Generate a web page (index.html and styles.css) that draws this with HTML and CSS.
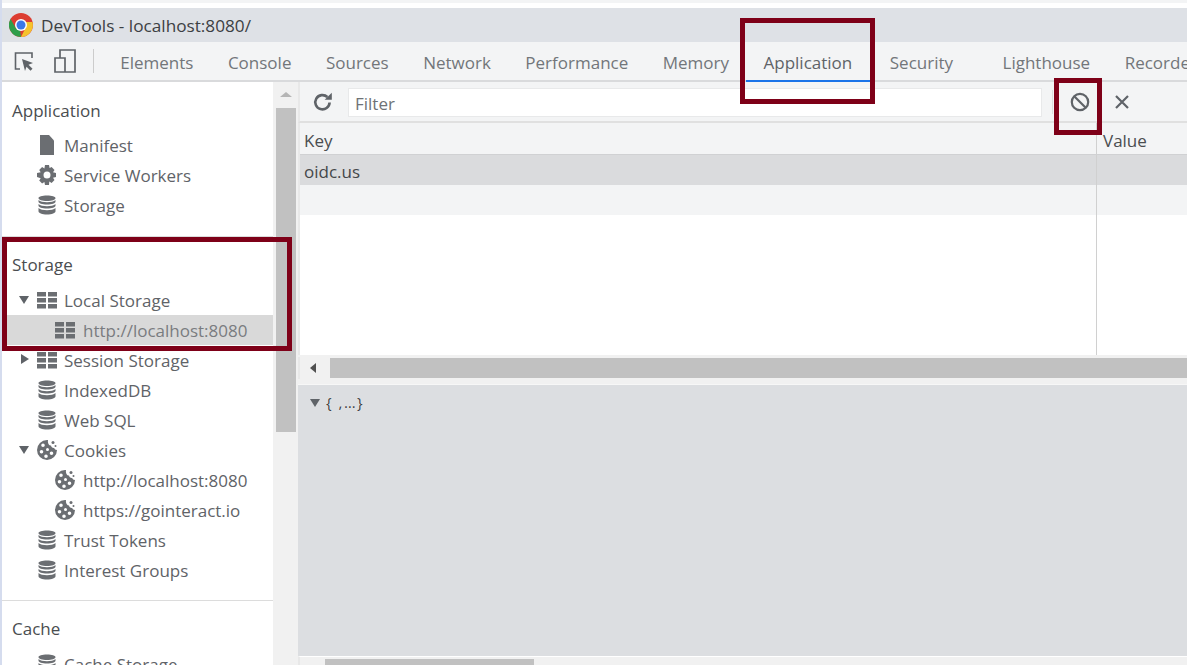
FILE: index.html
```html
<!DOCTYPE html>
<html lang="en">
<head>
<meta charset="utf-8">
<title>DevTools</title>
<link rel="stylesheet" href="styles.css">
</head>
<body>
<svg class="defs" width="0" height="0" aria-hidden="true">
  <defs>
    <symbol id="db" viewBox="0 0 20 20"><path d="M10 .5C5 .5 1.500 1.600 1.500 3.200S5 6 10 6s8.500-1.200 8.500-2.800S15 .5 10 .5zM1.500 5v1.700c0 1.600 3.500 2.800 8.500 2.800s8.500-1.200 8.500-2.800V5C17 6.500 13.500 7.200 10 7.200S3 6.500 1.500 5zM1.500 9v1.700c0 1.600 3.500 2.800 8.500 2.800s8.500-1.200 8.500-2.800V9c-1.500 1.500-5 2.200-8.500 2.200S3 10.500 1.500 9zM1.500 13v3.300c0 1.700 3.500 3.200 8.500 3.200s8.500-1.500 8.500-3.200V13c-1.500 1.500-5 2.200-8.500 2.200S3 14.500 1.500 13z"/></symbol>
    <symbol id="grid" viewBox="0 0 20 20"><path d="M0 2h9v4.500H0zM11 2h9v4.500h-9zM0 8h9v4.500H0zM11 8h9v4.500h-9zM0 14h9v4.500H0zM11 14h9v4.500h-9z"/></symbol>
    <symbol id="cookie" viewBox="0 0 20 20"><path fill-rule="evenodd" d="M10 0a10 10 0 1 0 10 10c-1.500 0-2.500-.8-2.800-2-1.700.2-3-.8-3.200-2.500C12 5.500 10.500 3.500 11 0h-1zM6 3.500a1.800 1.800 0 1 1 0 3.600 1.800 1.800 0 0 1 0-3.600zM10.500 8a1.500 1.500 0 1 1 0 3 1.500 1.500 0 0 1 0-3zM4.500 10a1.800 1.800 0 1 1 0 3.600 1.800 1.800 0 0 1 0-3.600zM14.500 11.500a1.800 1.800 0 1 1 0 3.600 1.800 1.800 0 0 1 0-3.600zM9 14.500a1.800 1.800 0 1 1 0 3.600 1.800 1.800 0 0 1 0-3.600z"/><circle cx="16" cy="2.500" r="1.500"/><circle cx="18.500" cy="6" r="1"/></symbol>
  </defs>
</svg>
<div class="app">
  <div class="top-strip"></div>
  <header class="titlebar">
    <svg class="chrome" viewBox="0 0 24 24" width="24" height="24">
      <circle cx="12" cy="12" r="12" fill="#dc3d31"/>
      <path d="M12 24A12 12 0 0 1 1.600 6L7 15.500l4 1z" fill="#2f9e4a"/>
      <path d="M12 24A12 12 0 0 0 23.500 9H15l2 5z" fill="#f5c32c"/>
      <circle cx="12" cy="12" r="6" fill="#fff"/>
      <circle cx="12" cy="12" r="4.500" fill="#3b78e7"/>
    </svg>
    <span class="title">DevTools - localhost:8080/</span>
  </header>
  <nav class="tabbar">
    <svg class="tool-icon inspect" viewBox="0 0 22 22" width="22" height="22">
      <path d="M7 19H2.500V3H19v5" fill="none" stroke="#5f6368" stroke-width="1.600"/>
      <path d="M9 9l11 4-4.500 1.700 4 4-2 2-4-4-1.500 4.300z" fill="#5f6368"/>
    </svg>
    <svg class="tool-icon device" viewBox="0 0 24 24" width="24" height="24">
      <path d="M7 9V1h15v22H2V9h10v14" fill="none" stroke="#5f6368" stroke-width="1.700"/>
    </svg>
    <span class="tool-sep"></span>
    <a class="tab">Elements</a>
    <a class="tab">Console</a>
    <a class="tab">Sources</a>
    <a class="tab">Network</a>
    <a class="tab">Performance</a>
    <a class="tab">Memory</a>
    <a class="tab active">Application</a>
    <a class="tab tab-gap">Security</a>
    <a class="tab">Lighthouse</a>
    <a class="tab">Recorder</a>
  </nav>
  <div class="content">
    <aside class="sidebar">
      <h2 class="section-title first">Application</h2>
      <div class="row lvl1"><svg class="ico" viewBox="0 0 20 20"><path d="M3 0h9l5 5.500V20H3z"/></svg>Manifest</div>
      <div class="row lvl1"><svg class="ico" viewBox="0 0 20 20"><path fill-rule="evenodd" d="M8 0h4l.6 3 2-.9 2.900 2.900-1.500 2.300 3 .7v4l-3 .7 1.500 2.300-2.900 2.900-2.300-1.500L12 20H8l-.6-3-2.300 1.500-2.900-2.900L3.700 13.300 0 12V8l3.700-.7L2.200 5 5.100 2.100l2.300 1.500zM10 6.500a3.500 3.500 0 1 0 0 7 3.500 3.500 0 0 0 0-7z"/></svg>Service Workers</div>
      <div class="row lvl1"><svg class="ico"><use href="#db"/></svg>Storage</div>
      <hr class="divider">
      <h2 class="section-title">Storage</h2>
      <div class="row lvl1"><i class="arrow down"></i><svg class="ico"><use href="#grid"/></svg>Local Storage</div>
      <div class="row lvl2 selected"><svg class="ico"><use href="#grid"/></svg>http://localhost:8080</div>
      <div class="row lvl1"><i class="arrow right"></i><svg class="ico"><use href="#grid"/></svg>Session Storage</div>
      <div class="row lvl1"><svg class="ico"><use href="#db"/></svg>IndexedDB</div>
      <div class="row lvl1"><svg class="ico"><use href="#db"/></svg>Web SQL</div>
      <div class="row lvl1"><i class="arrow down"></i><svg class="ico"><use href="#cookie"/></svg>Cookies</div>
      <div class="row lvl2"><svg class="ico"><use href="#cookie"/></svg>http://localhost:8080</div>
      <div class="row lvl2"><svg class="ico"><use href="#cookie"/></svg>https://gointeract.io</div>
      <div class="row lvl1"><svg class="ico"><use href="#db"/></svg>Trust Tokens</div>
      <div class="row lvl1"><svg class="ico"><use href="#db"/></svg>Interest Groups</div>
      <hr class="divider lower">
      <h2 class="section-title">Cache</h2>
      <div class="row lvl1"><svg class="ico"><use href="#db"/></svg>Cache Storage</div>
    </aside>
    <div class="side-scroll">
      <i class="scroll-up"></i>
      <div class="side-thumb"></div>
    </div>
    <main class="main">
      <div class="toolbar">
        <svg class="refresh" viewBox="0 0 20 20" width="22" height="22"><path d="M16 10.500a6.500 6.500 0 1 1-2-5" fill="none" stroke="#5f6368" stroke-width="2.400"/><path d="M11.500 8H18V1.500z" fill="#5f6368"/></svg>
        <div class="filter">Filter</div>
        <span class="toolbar-sep"></span>
        <svg class="clear" viewBox="0 0 20 20" width="20" height="20"><circle cx="10" cy="10" r="8.200" fill="none" stroke="#5f6368" stroke-width="2.200"/><path d="M4.500 4.500l11 11" stroke="#5f6368" stroke-width="2.200"/></svg>
        <svg class="close" viewBox="0 0 16 16" width="16" height="16"><path d="M2 2l12 12M14 2L2 14" stroke="#5f6368" stroke-width="2.200"/></svg>
      </div>
      <div class="table">
        <div class="thead"><div class="col-key">Key</div><div class="col-val">Value</div></div>
        <div class="trow selected-row"><div class="col-key">oidc.us</div><div class="col-val"></div></div>
        <div class="trow alt-row"><div class="col-key"></div><div class="col-val"></div></div>
        <div class="tfill"><div class="col-key"></div><div class="col-val"></div></div>
      </div>
      <div class="h-scroll"><i class="scroll-left"></i><div class="h-thumb"></div></div>
      <div class="preview"><i class="arrow down small"></i><span class="preview-text">{ ,…}</span></div>
      <div class="bottom-scroll"><div class="bottom-thumb"></div></div>
    </main>
  </div>
  <div class="callout call-tab"></div>
  <div class="callout call-clear"></div>
  <div class="callout call-storage"></div>
</div>
</body>
</html>
```

FILE: styles.css
```css
* { box-sizing: border-box; }
html, body { margin: 0; padding: 0; }
body { font-family: "Open Sans", "Noto Sans", sans-serif; color: #5f6368; background: #fff; }
.defs { position: absolute; }
.app { position: relative; width: 1187px; height: 665px; overflow: hidden; display: flex; flex-direction: column; border-left: 2px solid #d5dcee; }
.top-strip { height: 8px; background: linear-gradient(#f3f4f5 0 3px, #fff 3px); flex: none; }

.titlebar { height: 34px; flex: none; background: #dee1e6; display: flex; align-items: center; padding-left: 7px; gap: 8px; }
.title { font-size: 17.200px; color: #3c4043; white-space: nowrap; }

.tabbar { height: 40px; flex: none; background: #f3f4f5; border-bottom: 2px solid #d9dadc; display: flex; align-items: center; padding-left: 11px; white-space: nowrap; }
.tool-icon { flex: none; }
.device { margin-left: 18px; }
.tool-sep { width: 1px; height: 24px; background: #ccc; margin: 0 9px 0 16px; flex: none; }
.tab { font-size: 17px; align-self: stretch; display: flex; align-items: center; padding: 3px 17.250px 0; color: #72767a; flex: none; }
.tab.active { color: #5f6368; margin: 0 2px -2px 0; padding-top: 1px; padding-right: 18.250px; box-shadow: inset 0 -2px 0 #1a73e8; }
.tab.tab-gap { margin-right: 15px; }

.content { flex: 1; min-height: 0; display: flex; }
.sidebar { width: 271px; flex: none; background: #fff; overflow: hidden; }
.section-title { font-size: 17px; font-weight: 400; margin: 0; height: 30px; line-height: 30px; padding-left: 10px; color: #4a4d50; }
.section-title.first { margin-top: 14px; margin-bottom: 4px; }
.divider { border: 0; height: 1px; background: #dcdcdc; margin: 16px 0 13px; }
.divider.lower { margin: 15px 0 13px; }
.section-title + .row { margin-top: 5px; }
.section-title.first + .row { margin-top: 4px; }
.row { height: 30px; display: flex; align-items: center; font-size: 17px; position: relative; color: #5f6368; white-space: nowrap; }
.row.lvl1 { padding-left: 35px; }
.row.lvl2 { padding-left: 53px; }
.row.selected { background: #d9d9d9; color: #797c80; }
.ico { width: 20px; height: 20px; fill: #6b6e72; margin-right: 7px; flex: none; }
.lvl2 .ico { margin-right: 8px; }
.arrow { position: absolute; width: 0; height: 0; }
.arrow.down { left: 17px; top: 11px; border-left: 5.500px solid transparent; border-right: 5.500px solid transparent; border-top: 8px solid #5f6368; }
.arrow.right { left: 19px; top: 9px; border-top: 5.500px solid transparent; border-bottom: 5.500px solid transparent; border-left: 8px solid #5f6368; }

.side-scroll { width: 25px; flex: none; background: #f1f1f1; display: flex; flex-direction: column; align-items: center; }
.scroll-up { width: 0; height: 0; margin-top: 10px; border-left: 6px solid transparent; border-right: 6px solid transparent; border-bottom: 5px solid #b5b5b5; }
.side-thumb { width: 20px; height: 324px; background: #c1c1c1; margin-top: 11px; }

.main { flex: 1; min-width: 0; display: flex; flex-direction: column; background: #f1f1f1; }
.toolbar, .table, .h-scroll, .bottom-scroll { border-left: 2px solid #e8e8e8; }
.toolbar { height: 41px; flex: none; background: #f3f4f5; border-bottom: 2px solid #e0e0e0; display: flex; align-items: center; padding: 0 0 0 13px; }
.refresh { flex: none; margin-left: -1px; }
.filter { width: 694px; height: 29px; margin: 2px 0 0 14px; background: #fff; border: 1px solid #e8e9ea; font-size: 17px; line-height: 30px; padding-left: 6px; color: #6e7276; flex: none; }
.toolbar-sep { width: 1px; height: 24px; background: #ddd; margin-left: 10px; flex: none; }
.clear { margin-left: 17px; flex: none; }
.close { margin-left: 24px; flex: none; }

.table { flex: none; background: #fff; }
.thead, .trow { display: flex; height: 30px; font-size: 17px; line-height: 33px; }
.thead { height: 32px; line-height: 35px; background: #f3f4f5; border-bottom: 1px solid #d0d1d3; color: #4a4d50; }
.col-key { width: 797px; padding-left: 4px; flex: none; border-right: 1px solid #d0d0d0; height: 100%; }
.col-val { flex: 1; padding-left: 6px; }
.selected-row { background: #dadbdd; color: #44474a; }
.alt-row { background: #f3f4f5; }
.tfill { display: flex; height: 140px; background: #fff; }

.h-scroll { height: 22px; flex: none; margin-top: 2px; background: #f1f1f1; display: flex; align-items: center; }
.scroll-left { width: 0; height: 0; margin: 0 14px 0 10px; border-top: 5px solid transparent; border-bottom: 5px solid transparent; border-right: 6px solid #505050; flex: none; }
.h-thumb { flex: 1; height: 20px; background: #c1c1c1; }

.preview { flex: 1; min-height: 0; margin-top: 5px; background: #dcdee1; position: relative; border-top: 1px solid #f7f7f7; padding: 6px 0 0 28px; }
.arrow.small { left: 12px; top: 14px; }
.preview-text { font-family: "Open Sans", sans-serif; font-size: 15px; line-height: 22px; color: #3a3d40; letter-spacing: 1.500px; text-shadow: 0 0 1px #fff; }
.bottom-scroll { height: 9px; flex: none; background: #f1f1f1; padding: 2px 0 0 25px; border-top: 1px solid #fff; }
.bottom-thumb { width: 209px; height: 100%; background: #c1c1c1; }

.callout { position: absolute; border: 5px solid #7e0018; }
.call-tab { left: 738px; top: 18px; width: 135px; height: 86px; }
.call-clear { left: 1052px; top: 78px; width: 48px; height: 57px; }
.call-storage { left: 0; top: 237px; width: 290px; height: 114px; }
```
